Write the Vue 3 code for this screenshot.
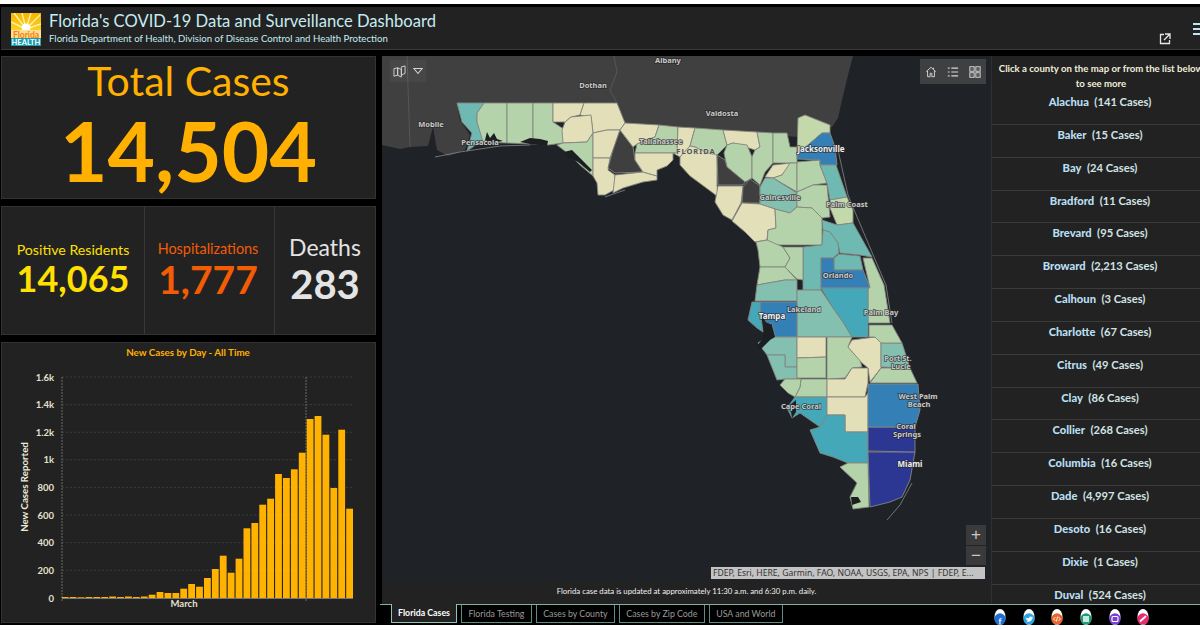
<script setup>
// rough colours per case band
const C = {
  cream: '#e3dfb8', lime: '#c3d9ac', green: '#b4d3aa', mint: '#83c0b0', teal: '#6fb9b3',
  aqua: '#45a8b9', blue: '#347fb6', navy: '#2c3794', none: '#3f3f3f'
}

// county outlines, traced in page pixels (the svg viewBox starts at the map's corner)
const counties = [
  ['teal', '457,103 484,103 477,113 477,122 483,140 467,151 472,133 462,122'],
  ['green', '484,103 507,103 507,143 483,142 477,122 477,113'],
  ['green', '507,103 533,103 533,144 507,143'],
  ['green', '533,103 553,103 553,122 565,130 563,143 548,145 533,144'],
  ['cream', '553,103 584,103 580,115 571,117 565,122 553,122'],
  ['cream', '584,103 617,103 625,123 620,130 607,130 593,133 591,117 580,115'],
  ['cream', '571,117 591,115 593,133 587,142 563,143 562,130 565,122'],
  ['green', '557,145 563,143 587,142 593,133 593,176 580,165 570,155'],
  ['cream', '593,133 607,130 620,130 613,150 610,158 593,158'],
  ['cream', '593,158 610,158 608,170 615,175 614,190 605,195 598,195 597,183 593,176'],
  ['none', '620,130 633,147 635,160 643,172 615,173 608,168 613,150'],
  ['cream', '615,175 643,172 657,176 657,180 643,182 623,188 613,193'],
  ['cream', '625,123 659,125 655,137 637,144 633,147 620,130'],
  ['green', '659,125 678,127 677,153 635,153 637,144 655,137'],
  ['cream', '635,153 673,153 673,160 667,166 657,170 657,176 643,172 635,160'],
  ['cream', '678,127 695,128 690,146 680,157 673,153 677,153'],
  ['green', '695,128 723,130 727,145 717,155 707,153 695,147 690,146'],
  ['cream', '680,157 690,146 695,147 707,153 717,155 717,185 718,197 713,193 690,176 680,165'],
  ['cream', '723,130 757,132 760,147 755,150 733,143 727,145'],
  ['green', '733,143 747,145 752,157 752,178 745,182 727,167 724,153 727,145'],
  ['green', '757,132 773,133 773,163 765,172 760,185 752,178 752,157 755,150 760,147'],
  ['green', '773,133 787,133 790,147 797,147 797,163 773,163'],
  ['none', '717,155 725,160 727,167 745,182 743,185 718,185'],
  ['cream', '718,186 743,186 741,203 732,220 723,215 715,202'],
  ['none', '750,179 760,186 760,203 742,203 743,187'],
  ['cream', '765,177 773,165 792,163 782,175 773,178'],
  ['green', '790,163 797,163 797,192 773,178 782,175'],
  ['mint', '760,187 765,178 773,178 797,193 797,207 790,213 775,209 760,204'],
  ['green', '797,162 820,160 820,165 827,183 813,185 797,192'],
  ['green', '797,192 813,185 827,185 830,217 822,218 812,208 797,207'],
  ['lime', '797,155 798,118 805,115 830,125 830,133 822,133 808,145'],
  ['blue', '797,159 797,153 808,145 822,133 830,133 835,147 837,165 820,165 820,160'],
  ['teal', '820,165 836,165 847,197 830,200 827,183'],
  ['lime', '830,200 847,197 853,210 853,223 837,225 830,208'],
  ['cream', '742,203 760,204 775,209 776,228 768,230 767,240 755,242 745,232 732,221'],
  ['green', '775,209 790,213 797,207 812,208 822,218 822,245 767,245 768,230 776,228'],
  ['teal', '822,220 837,225 853,223 872,257 860,255 840,253 838,243 830,232 823,230'],
  ['teal', '803,247 822,245 823,230 830,232 838,243 839,253 833,258 821,258 821,290 803,290'],
  ['teal', '834,258 839,254 860,256 863,270 853,270 834,270'],
  ['blue', '821,258 834,258 834,270 863,270 870,288 821,288'],
  ['green', '863,258 872,258 884,285 890,323 868,323 868,288 870,288'],
  ['green', '756,242 767,240 783,247 790,258 785,267 760,267 758,250'],
  ['green', '783,247 803,247 803,280 797,279 785,267 790,258'],
  ['green', '760,267 785,267 797,280 785,280 757,285'],
  ['mint', '757,285 785,280 797,280 797,301 755,301'],
  ['mint', '797,290 821,290 833,308 843,322 852,337 797,337'],
  ['aqua', '821,288 868,288 868,337 852,337 843,322 833,308'],
  ['blue', '760,302 797,302 797,337 775,337 772,323 768,325 760,310'],
  ['aqua', '752,302 760,302 760,310 763,332 757,328 748,320'],
  ['mint', '767,337 797,337 797,367 785,367 785,355 767,355 758,343'],
  ['mint', '767,355 785,355 785,367 797,367 797,379 785,379 777,380'],
  ['green', '797,379 827,379 827,397 795,397 800,387 801,379'],
  ['green', '785,379 801,379 800,387 795,397 788,393 780,385'],
  ['aqua', '795,397 827,397 827,420 820,427 810,420 800,413 792,418 787,408'],
  ['cream', '797,337 826,337 826,357 797,358'],
  ['green', '797,358 826,357 826,378 797,378'],
  ['green', '827,337 852,337 848,347 860,360 862,367 852,368 845,378 827,379'],
  ['cream', '852,340 875,337 881,343 881,368 870,382 868,368 862,363 848,347'],
  ['cream', '845,379 852,368 868,368 868,383 865,397 827,397 827,379'],
  ['cream', '827,397 865,397 868,393 868,432 845,432 845,415 827,415'],
  ['aqua', '827,415 845,415 845,432 868,432 868,463 848,463 833,457 820,453 810,430 820,427'],
  ['green', '848,463 868,463 869,507 853,509 850,497 857,483 840,467'],
  ['navy', '868,452 915,452 910,480 902,497 890,502 870,507'],
  ['navy', '868,427 915,427 915,452 868,451'],
  ['blue', '868,384 918,384 920,410 915,427 868,427'],
  ['green', '881,368 910,368 917,383 870,383'],
  ['mint', '881,343 902,343 910,368 881,367'],
  ['green', '869,325 892,325 902,343 881,343 875,337 869,337']
].map(([key, points]) => ({ fill: C[key], points }))

const bays = [
  '485,140 487,132 490,138 494,133 497,139 503,141 492,143',
  '520,142 530,138 540,139 548,141 547,146 530,144',
  '564,152 572,150 577,155 585,163 592,170 590,172 578,162 568,157',
  '765,322 770,324 773,330 775,337 770,340 765,345 760,350 757,346 763,338',
  '851,497 858,497 861,502 852,505',
  '790,405 796,400 796,412 792,418'
]

const labels = [
  { x: 668, y: 63, t: 'Albany' }, { x: 593, y: 88, t: 'Dothan' }, { x: 431, y: 127, t: 'Mobile' },
  { x: 722, y: 116, t: 'Valdosta' }, { x: 480, y: 145, t: 'Pensacola' },
  { x: 661, y: 144, t: 'Tallahassee' }, { x: 696, y: 154, t: 'FLORIDA', bold: true },
  { x: 821, y: 152, t: 'Jacksonville', bright: true }, { x: 780, y: 200, t: 'Gainesville' },
  { x: 847, y: 207, t: 'Palm Coast' }, { x: 838, y: 278, t: 'Orlando' }, { x: 772, y: 319, t: 'Tampa', bright: true },
  { x: 804, y: 312, t: 'Lakeland' }, { x: 881, y: 315, t: 'Palm Bay' }, { x: 898, y: 361, t: 'Port St.' },
  { x: 901, y: 369, t: 'Lucie' }, { x: 918, y: 399, t: 'West Palm' }, { x: 919, y: 407, t: 'Beach' },
  { x: 801, y: 409, t: 'Cape Coral' }, { x: 906, y: 429, t: 'Coral' }, { x: 907, y: 437, t: 'Springs' },
  { x: 910, y: 467, t: 'Miami', bright: true }
]

const list = [
  ['Alachua', '141'], ['Baker', '15'], ['Bay', '24'], ['Bradford', '11'], ['Brevard', '95'], ['Broward', '2,213'],
  ['Calhoun', '3'], ['Charlotte', '67'], ['Citrus', '49'], ['Clay', '86'], ['Collier', '268'], ['Columbia', '16'],
  ['Dade', '4,997'], ['Desoto', '16'], ['Dixie', '1'], ['Duval', '524']
]

const tabs = ['Florida Cases', 'Florida Testing', 'Cases by County', 'Cases by Zip Code', 'USA and World']

const socials = ['#1f6fd0', '#2aa3e8', '#e8642a', '#1f9a78', '#7a3fd8', '#e82a6e']

// bar heights in px above the axis, read from the chart
const barHeights = [1, 1, 0.7, 1, 1, 1, 1.5, 1, 1.5, 1, 1.5, 3.3, 6, 5, 5, 9.3, 14, 11.3, 20, 29, 42.3, 25.3, 39.3, 69.7, 75, 93.3, 99.3, 124, 120, 128.7, 145.3, 179, 182, 163.3, 110, 168.3, 89.3]
const bars = barHeights.map((h, i) => ({ x: 61.8 + i * 7.9, h }))
const yTicks = [['1.6k', 378], ['1.4k', 405.6], ['1.2k', 433.2], ['1k', 460.8], ['800', 488.4], ['600', 516], ['400', 543.6], ['200', 571.2], ['0', 599]]
</script>

<template>
  <div class="page">
    <div class="dash">
      <header class="top">
        <svg class="logo" viewBox="0 0 30 33">
          <defs>
            <linearGradient id="sky" x1="0" y1="0" x2="0" y2="1">
              <stop offset="0" stop-color="#f7b500" />
              <stop offset="1" stop-color="#ffe64d" />
            </linearGradient>
          </defs>
          <rect width="30" height="33" fill="url(#sky)" />
          <path d="M15 16L3 0M15 16L11 0M15 16L20 0M15 16L29 2M15 16L30 11M15 16L0 9" stroke="#fff3a0" stroke-width="1.4" />
          <circle cx="15" cy="15" r="4.5" fill="#fff" />
          <rect y="17" width="30" height="9" fill="#ffe08a" />
          <text x="15" y="24.5" text-anchor="middle" class="logo-a">Florida</text>
          <rect y="25" width="30" height="8" fill="#1d9bb0" />
          <text x="15" y="32" text-anchor="middle" class="logo-b">HEALTH</text>
        </svg>
        <div class="titles">
          <h1>Florida's COVID-19 Data and Surveillance Dashboard</h1>
          <p>Florida Department of Health, Division of Disease Control and Health Protection</p>
        </div>
        <svg class="ext" viewBox="0 0 12 12">
          <path d="M5 1.5H1.5V10.5H10.5V7" fill="none" stroke="#e6e6e6" stroke-width="1.3" />
          <path d="M6 1H11V6M11 1L5 7" fill="none" stroke="#e6e6e6" stroke-width="1.3" />
        </svg>
        <div class="burger"><i></i><i></i><i></i></div>
      </header>

      <div class="body">
        <aside class="left">
          <section class="card total">
            <div class="total-label">Total Cases</div>
            <div class="total-num">14,504</div>
          </section>

          <section class="card stats">
            <div class="stat s1">
              <div class="s-label">Positive Residents</div>
              <div class="s-num">14,065</div>
            </div>
            <div class="stat s2">
              <div class="s-label">Hospitalizations</div>
              <div class="s-num">1,777</div>
            </div>
            <div class="stat s3">
              <div class="s-label">Deaths</div>
              <div class="s-num">283</div>
            </div>
          </section>

          <section class="card chart">
            <svg viewBox="1 343 375 280" width="375" height="280">
              <text x="188" y="357" text-anchor="middle" class="c-title">New Cases by Day - All Time</text>
              <line v-for="t in yTicks" :key="t[0]" x1="62" x2="354" :y1="t[1]" :y2="t[1]" class="grid" />
              <line x1="62" x2="62" y1="378" y2="602" class="axis" />
              <line x1="306" x2="306" y1="378" y2="602" class="axis" />
              <text v-for="t in yTicks" :key="'l' + t[0]" x="54" :y="t[1] + 3.5" text-anchor="end" class="tick">{{ t[0] }}</text>
              <rect v-for="(b, i) in bars" :key="i" :x="b.x" :y="599 - b.h" width="6.8" :height="b.h" class="bar" />
              <line x1="62" x2="353" y1="599.5" y2="599.5" class="base" />
              <text x="184" y="608" text-anchor="middle" class="tick">March</text>
              <text transform="translate(28 488) rotate(-90)" text-anchor="middle" class="y-title">New Cases Reported</text>
            </svg>
          </section>
        </aside>

        <div class="right">
          <div class="panes">
            <main class="centre">
              <div class="map">
                <svg class="map-svg" viewBox="382 56 608 525" width="608" height="525">
                  <path class="land" d="M382 56H853L848 75L842 100L838 118L832 127L800 137L625 125L617 103H457L460 120L470 135L465 150L448 156L437 150L433 127L428 146L410 147L400 149L382 145Z" />
                  <path class="land-line" d="M407 56L410 147M614 56L617 72L610 90L617 103" />
                  <polygon v-for="(c, i) in counties" :key="i" :points="c.points" :fill="c.fill" class="county" />
                  <polygon v-for="(b, i) in bays" :key="'b' + i" :points="b" class="bay" />
                  <path class="coast" d="M435 157L460 152L500 146L530 145M605 197L625 190" />
                  <path class="coast" d="M838 150L848 195L855 212L874 257L886 285L892 323" />
                  <path class="coast" d="M887 520L900 505L912 483" />
                  <text v-for="l in labels" :key="l.t" :x="l.x" :y="l.y" text-anchor="middle" class="label" :class="{ bright: l.bright, heavy: l.bold }">{{ l.t }}</text>
                </svg>

                <div class="tools-left">
                  <svg viewBox="0 0 14 14" width="13" height="13">
                    <path d="M1 4L5 3V11L1 12ZM5 3L9 5V13L5 11ZM9 2L13 1V9L9 11Z" fill="none" stroke="#d5d5d5" stroke-width="1" />
                  </svg>
                  <svg viewBox="0 0 12 12" width="10" height="10">
                    <path d="M1 3H11L6 9Z" fill="none" stroke="#d5d5d5" stroke-width="1.3" />
                  </svg>
                </div>

                <div class="tools-right">
                  <svg viewBox="0 0 14 14" width="12" height="12">
                    <path d="M1.5 6.5L7 1.5L12.5 6.5M3 5.5V12.5H6V8.5H8V12.5H11V5.5M10 2V4" fill="none" stroke="#d5d5d5" stroke-width="1.1" />
                  </svg>
                  <svg viewBox="0 0 14 14" width="12" height="12">
                    <path d="M1 2.5H3M5 2.5H13M1 7H3M5 7H13M1 11.5H3M5 11.5H13" stroke="#d5d5d5" stroke-width="1.4" />
                  </svg>
                  <svg viewBox="0 0 14 14" width="12" height="12">
                    <path d="M1 1H6V6H1ZM8 1H13V6H8ZM1 8H6V13H1ZM8 8H13V13H8Z" fill="none" stroke="#d5d5d5" stroke-width="1.2" />
                    <path d="M3 3H4V4H3ZM10 3H11V4H10ZM3 10H4V11H3ZM10 10H11V11H10Z" fill="#d5d5d5" />
                  </svg>
                </div>

                <div class="zoom-box">
                  <span>+</span>
                  <span>−</span>
                </div>
                <div class="attr">FDEP, Esri, HERE, Garmin, FAO, NOAA, USGS, EPA, NPS | FDEP, E...</div>
              </div>
              <div class="note">Florida case data is updated at approximately 11:30 a.m. and 6:30 p.m. daily.</div>
            </main>

            <aside class="list">
              <p class="hint">Click a county on the map or from the list below to see more</p>
              <div v-for="row in list" :key="row[0]" class="row">
                <b>{{ row[0] }}</b>&nbsp; ({{ row[1] }} Cases)
              </div>
            </aside>
          </div>

          <footer class="bottom">
            <nav class="tabs">
              <span v-for="(tab, i) in tabs" :key="tab" class="tab" :class="{ on: i === 0 }">{{ tab }}</span>
            </nav>
            <div class="social">
              <svg v-for="(color, i) in socials" :key="color" class="soc" viewBox="0 0 12 16">
                <ellipse cx="6" cy="8" rx="5.5" ry="8" fill="#fff" />
                <circle cx="6" cy="10" r="5.7" :fill="color" />
                <text v-if="i === 0" x="6" y="14.5" text-anchor="middle" class="soc-f">f</text>
                <path v-else-if="i === 1" d="M2.5 8.5C4 9.5 5.5 9.5 6 9C6 7.5 8 7 9 8L10 7.7L9.5 8.7C9.5 11 7 13.5 3 12.5C4 12.5 4.7 12 5 11.7C3.7 11.5 3 10 2.5 8.5Z" fill="#fff" />
                <path v-else-if="i === 2" d="M4.5 8L2.5 10L4.5 12M7.5 8L9.5 10L7.5 12M6.7 7.5L5.3 12.5" fill="none" stroke="#fff" stroke-width="0.9" />
                <rect v-else-if="i === 3" x="3" y="7" width="6" height="6" fill="#bfeadd" />
                <rect v-else-if="i === 4" x="3" y="7.5" width="6" height="5" rx="1" fill="none" stroke="#fff" stroke-width="1.1" />
                <path v-else d="M3.5 12L8.5 7.5" stroke="#fff" stroke-width="1.8" stroke-linecap="round" />
              </svg>
            </div>
          </footer>
        </div>
      </div>
    </div>
  </div>
</template>

<style>
html, body { margin: 0; background: #fff; }
</style>

<style scoped>
.page {
  width: 1200px;
  height: 630px;
  padding-top: 4px;
  box-sizing: border-box;
  overflow: hidden;
  background: #fff;
  font-family: Lato, "Noto Sans", sans-serif;
}
.dash {
  height: 621px;
  background: #000;
  padding-top: 3px;
  box-sizing: border-box;
  display: flex;
  flex-direction: column;
}
.top {
  height: 42px;
  margin: 0 0 6px 1px;
  background: #222;
  border-bottom: 1px solid #3a3a3a;
  display: flex;
  align-items: center;
  padding-left: 10px;
  position: relative;
}
.logo { width: 30px; height: 33px; margin-top: 2px; }
.logo-a { font: 700 8.5px Lato, sans-serif; fill: #f47b20; }
.logo-b { font: 700 7.5px Lato, sans-serif; fill: #fff; }
.titles { margin-left: 8px; color: #c5ecf2; }
.titles h1 { margin: 0; font-size: 16.6px; font-weight: 400; line-height: 21px; white-space: nowrap; }
.titles p { margin: 0; font-size: 9.65px; line-height: 13px; white-space: nowrap; }
.ext { position: absolute; left: 1158px; top: 26px; width: 12px; height: 12px; }
.burger { position: absolute; left: 1192px; top: 16px; width: 10px; display: flex; flex-direction: column; gap: 3.5px; }
.burger i { display: block; height: 1.5px; background: #bfe6f0; }

.body { display: flex; flex: 1; min-height: 0; }
.left { width: 375px; margin-left: 1px; display: flex; flex-direction: column; gap: 7px; flex: none; }
.card { background: #222; border: 1px solid #333; box-sizing: border-box; flex: none; }
.total { height: 143px; text-align: center; color: #ffb000; }
.total-label { font-size: 41px; line-height: 48px; }
.total-num { font-size: 82px; font-weight: 700; line-height: 90px; }

.stats { height: 129px; display: flex; }
.stat { text-align: center; border-right: 1px solid #383838; display: flex; flex-direction: column; justify-content: center; box-sizing: border-box; padding-bottom: 4px; }
.s1 { width: 143px; color: #ffe000; }
.s2 { width: 130px; color: #f25c05; padding-right: 3px; }
.s3 { flex: 1; color: #e4e4e4; border-right: 0; }
.s-num { font-weight: 700; line-height: 40px; }
.s1 .s-label { font-size: 14.2px; line-height: 18px; }
.s1 .s-num { font-size: 36px; line-height: 38px; }
.s2 .s-label { font-size: 14.4px; line-height: 20px; }
.s2 .s-num { font-size: 39px; }
.s3 .s-label { font-size: 23px; line-height: 30px; }
.s3 .s-num { font-size: 40px; line-height: 44px; }

.chart { height: 281px; }
.chart svg { display: block; margin: -1px; }
.c-title { font: 700 9.8px Lato, sans-serif; fill: #ffb000; }
.tick { font: 700 9.5px Lato, sans-serif; fill: #e5e1cf; }
.y-title { font: 700 9.7px Lato, sans-serif; fill: #eee9d8; }
.grid { stroke: #444; stroke-dasharray: 2 2; stroke-width: 0.8; }
.axis { stroke: #6a6a6a; stroke-dasharray: 2 1; stroke-width: 1; }
.base { stroke: #777; stroke-width: 1; }
.bar { fill: #ffb300; }

.right { flex: 1; min-width: 0; margin-left: 4px; display: flex; flex-direction: column; }
.panes { display: flex; height: 548px; margin-left: 2px; flex: none; }
.centre { width: 609px; display: flex; flex-direction: column; flex: none; }
.map { height: 525px; position: relative; background: #1f2327; overflow: hidden; flex: none; }
.map-svg { display: block; }
.land { fill: #404040; }
.land-line { fill: none; stroke: #5c5c5c; stroke-width: 0.8; }
.county { stroke: #84877f; stroke-width: 0.9; stroke-linejoin: round; }
.bay { fill: #1c1f22; }
.coast { fill: none; stroke: #85888a; stroke-width: 0.8; }
.label {
  font: 700 7.5px "Noto Sans", sans-serif;
  fill: #c9c9c9;
  paint-order: stroke;
  stroke: rgba(40, 40, 40, 0.75);
  stroke-width: 1.6px;
}
.label.bright { fill: #f0f0f0; font-size: 8px; }
.label.heavy { fill: #555; stroke: rgba(220, 220, 200, 0.5); letter-spacing: 1px; }

.tools-left {
  position: absolute; left: 8px; top: 4px; width: 36px; height: 22px;
  display: flex; align-items: center; justify-content: space-around;
  background: rgba(255, 255, 255, 0.04);
}
.tools-right {
  position: absolute; left: 538px; top: 3px; width: 66px; height: 25px;
  display: flex; align-items: center; justify-content: space-around;
  background: #3e4041;
}
.zoom-box {
  position: absolute; left: 584px; top: 469px; width: 20px;
  display: flex; flex-direction: column; gap: 1px;
}
.zoom-box span {
  height: 19.5px; background: #3a3a3a; color: #c8c8c8;
  font: 400 17px/19px "Liberation Sans", sans-serif; text-align: center;
}
.attr {
  position: absolute; left: 329px; top: 511px; width: 274px; height: 12px; box-sizing: border-box; padding-left: 2px;
  background: #c3c3c3; color: #333;
  font: 400 8.6px/12px "Noto Sans", sans-serif; white-space: nowrap; overflow: hidden;
}
.note {
  height: 23px; background: #222; color: #f0f0f0;
  font-size: 7.8px; line-height: 20px; text-align: center;
}

.list { width: 218px; background: #222; color: #d6e6ea; flex: none; height: 548px; overflow: hidden; border-left: 1px solid #303030; box-sizing: border-box; }
.hint { margin: 0 0 2px 3px; padding-top: 5px; font-size: 9.65px; font-weight: 700; line-height: 14.5px; text-align: center; color: #f2eedd; width: 212px; }
.row { height: 32.85px; font-size: 11.2px; font-weight: 700; line-height: 20px; text-align: center; border-bottom: 1px solid #3b3b3b; box-sizing: border-box; width: 216px; color: #d2e3e6; }
.row b { color: #b7dff2; }

.bottom { flex: 1; position: relative; border-top: 1px solid #7fb3aa; min-height: 0; }
.tabs { display: flex; gap: 4px; margin-left: 11px; }
.tab {
  height: 18px; padding: 0 6.4px; box-sizing: border-box;
  border: 1px solid #5f8b85; border-top: 0;
  color: #9a9a9a; font-size: 8.8px; line-height: 18px; white-space: nowrap;
}
.tab.on { color: #fff; font-weight: 700; background: #222; border-color: #8ec4bb; margin-top: -1px; height: 19px; padding: 0 6px; }
.social { position: absolute; left: 614px; top: 4px; display: flex; gap: 16.7px; }
.soc { width: 12px; height: 16px; display: block; flex: none; }
.soc-f { font: 700 8px Lato, sans-serif; fill: #fff; }
</style>
